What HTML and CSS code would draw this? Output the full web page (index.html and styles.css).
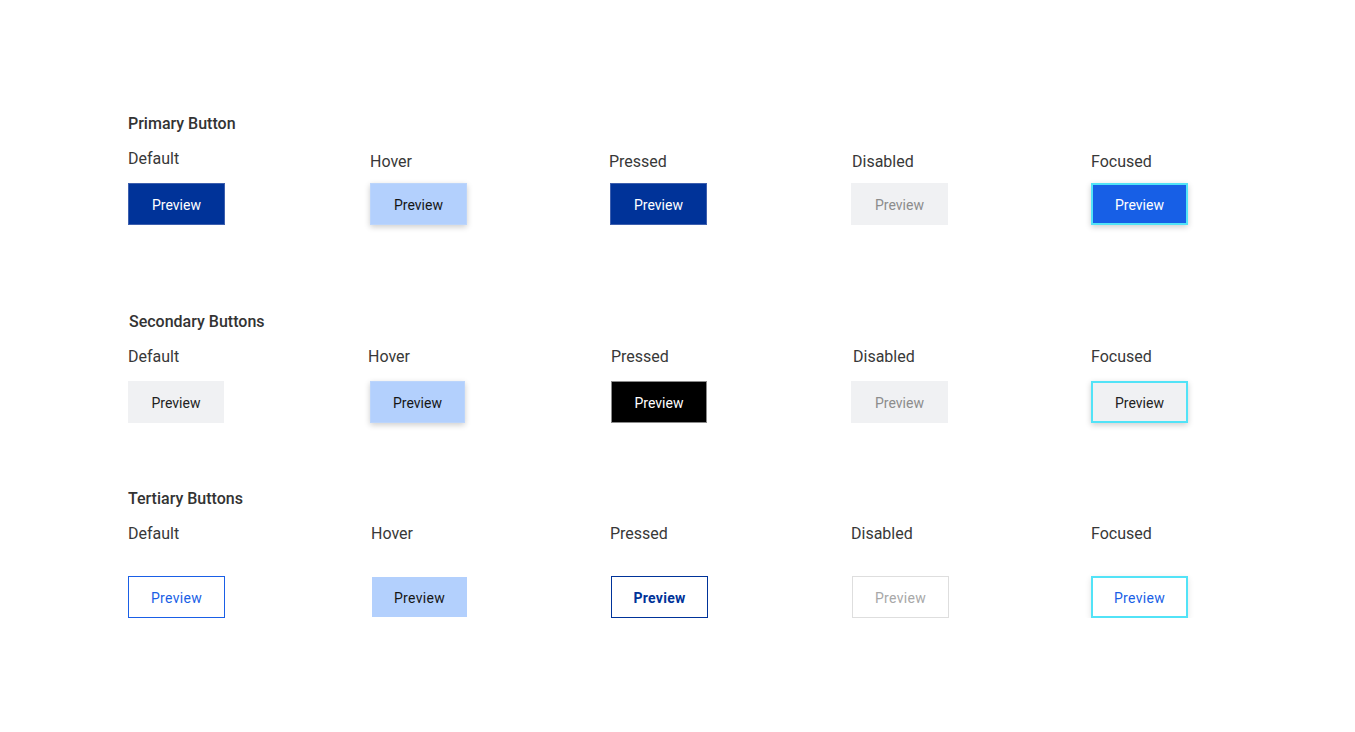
FILE: index.html
```html
<!DOCTYPE html>
<html>
<head>
<meta charset="utf-8">
<link rel="stylesheet" href="styles.css">
</head>
<body>
<main class="page">
  <section class="group group-primary">
    <h2 class="title">Primary Button</h2>
    <div class="grid">
      <div class="cell"><span class="label label-up">Default</span><button class="btn p-default">Preview</button></div>
      <div class="cell"><span class="label">Hover</span><button class="btn p-hover">Preview</button></div>
      <div class="cell"><span class="label label-left">Pressed</span><button class="btn p-pressed">Preview</button></div>
      <div class="cell"><span class="label label-right">Disabled</span><button class="btn p-disabled">Preview</button></div>
      <div class="cell"><span class="label">Focused</span><button class="btn p-focused">Preview</button></div>
    </div>
  </section>

  <section class="group group-secondary">
    <h2 class="title title-shift">Secondary Buttons</h2>
    <div class="grid">
      <div class="cell"><span class="label">Default</span><button class="btn s-default">Preview</button></div>
      <div class="cell"><span class="label label-left2">Hover</span><button class="btn s-hover">Preview</button></div>
      <div class="cell"><span class="label label-right">Pressed</span><button class="btn s-pressed">Preview</button></div>
      <div class="cell"><span class="label label-right2">Disabled</span><button class="btn s-disabled">Preview</button></div>
      <div class="cell"><span class="label">Focused</span><button class="btn s-focused">Preview</button></div>
    </div>
  </section>

  <section class="group group-tertiary">
    <h2 class="title">Tertiary Buttons</h2>
    <div class="grid">
      <div class="cell"><span class="label">Default</span><button class="btn t-default">Preview</button></div>
      <div class="cell"><span class="label label-right">Hover</span><button class="btn t-hover">Preview</button></div>
      <div class="cell"><span class="label">Pressed</span><button class="btn t-pressed">Preview</button></div>
      <div class="cell"><span class="label">Disabled</span><button class="btn t-disabled">Preview</button></div>
      <div class="cell"><span class="label">Focused</span><button class="btn t-focused">Preview</button></div>
    </div>
  </section>
</main>
</body>
</html>
```
FILE: styles.css
```css
html, body {
  margin: 0;
  padding: 0;
  background: #ffffff;
}

body {
  font-family: Roboto, "Liberation Sans", Arial, sans-serif;
  color: #333333;
}

.page {
  padding: 114px 0 0 128px;
}

.group-secondary {
  margin-top: 87px;
}

.group-tertiary {
  margin-top: 66px;
}

.title {
  margin: 0;
  font-size: 16px;
  font-weight: 500;
  line-height: 20px;
  color: #333333;
}

.title-shift {
  padding-left: 1px;
}

.grid {
  display: grid;
  grid-template-columns: 242px 240px 241px 240px 120px;
  margin-top: 18px;
}

.group-secondary .grid,
.group-tertiary .grid {
  margin-top: 15px;
}

.cell {
  display: flex;
  flex-direction: column;
  align-items: flex-start;
  gap: 11px;
}

.group-secondary .cell {
  gap: 14px;
}

.group-tertiary .cell {
  gap: 32px;
}

.label {
  font-size: 16px;
  line-height: 20px;
  color: #383838;
}

.label-up {
  margin-top: -3px;
  margin-bottom: 3px;
}

.label-left {
  margin-left: -1px;
}

.label-left2 {
  margin-left: -2px;
}

.label-right {
  margin-left: 1px;
}

.label-right2 {
  margin-left: 2px;
}

.btn {
  box-sizing: border-box;
  width: 97px;
  height: 42px;
  padding: 1px 0 0;
  font-family: Roboto, "Liberation Sans", Arial, sans-serif;
  font-size: 14px;
  line-height: 18px;
  border: 1px solid transparent;
  background: transparent;
  color: #222222;
  cursor: pointer;
}

/* Primary */
.p-default,
.p-pressed {
  background: #003399;
  border-color: #3d5fae;
  color: #ffffff;
}

.p-hover {
  background: #b3d0fd;
  border-color: #bcd5fb;
  color: #161616;
  box-shadow: 0 2px 6px rgba(0, 0, 0, 0.2);
}

.p-disabled {
  background: #f0f1f3;
  border-color: #f0f1f3;
  color: #8c8c8c;
}

.p-focused {
  background: #175fe6;
  border: 2px solid #52e3f7;
  color: #ffffff;
  box-shadow: 0 2px 6px rgba(0, 0, 0, 0.2);
}

/* Secondary */
.s-default {
  width: 96px;
  background: #f0f1f3;
  border-color: #f0f1f3;
  color: #222222;
}

.s-hover {
  width: 95px;
  background: #b3d0fd;
  border-color: #bcd5fb;
  color: #161616;
  box-shadow: 0 2px 6px rgba(0, 0, 0, 0.2);
}

.s-pressed {
  width: 96px;
  margin-left: 1px;
  background: #000000;
  border-color: #8a8a8a;
  color: #ffffff;
}

.s-disabled {
  background: #f0f1f3;
  border-color: #f0f1f3;
  color: #8c8c8c;
}

.s-focused {
  background: #f0f1f3;
  border: 2px solid #52e3f7;
  color: #222222;
  box-shadow: 0 2px 6px rgba(0, 0, 0, 0.2);
}

/* Tertiary */
.t-default {
  background: #ffffff;
  border-color: #1a5fe6;
  color: #1a5fe6;
  letter-spacing: 0.3px;
}

.t-hover {
  width: 95px;
  height: 40px;
  margin-top: 1px;
  margin-left: 2px;
  background: #b3d0fd;
  border-color: #b3d0fd;
  color: #161616;
  letter-spacing: 0.3px;
}

.t-pressed {
  margin-left: 1px;
  background: #ffffff;
  border-color: #003399;
  color: #003399;
  font-weight: 700;
  letter-spacing: 0.3px;
}

.t-disabled {
  margin-left: 1px;
  background: #ffffff;
  border-color: #dedede;
  color: #a8a8a8;
  letter-spacing: 0.3px;
}

.t-focused {
  background: #ffffff;
  border: 2px solid #52e3f7;
  color: #1a5fe6;
  letter-spacing: 0.3px;
  box-shadow: 0 2px 6px rgba(0, 0, 0, 0.12);
}
```
